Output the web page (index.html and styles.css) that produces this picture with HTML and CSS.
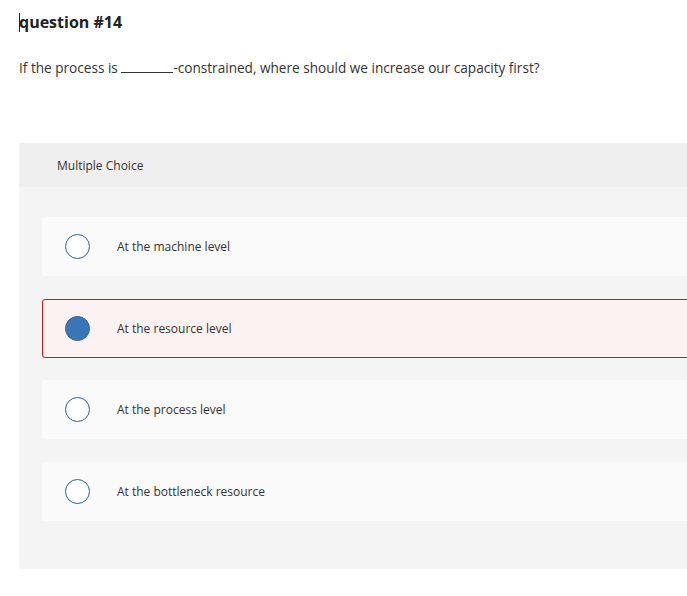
FILE: index.html
```html
<!DOCTYPE html>
<html>
<head>
<meta charset="utf-8">
<link rel="stylesheet" href="styles.css">
</head>
<body>
<div class="page">
  <h1 class="title"><span class="caret"></span>question #14</h1>
  <p class="prompt">If the process is <span class="blank"></span>-constrained, where should we increase our capacity first?</p>
  <div class="card">
    <div class="card-head">Multiple Choice</div>
    <div class="card-body">
      <div class="option"><span class="radio"></span><span class="label">At the machine level</span></div>
      <div class="option selected"><span class="radio"></span><span class="label">At the resource level</span></div>
      <div class="option"><span class="radio"></span><span class="label">At the process level</span></div>
      <div class="option"><span class="radio"></span><span class="label">At the bottleneck resource</span></div>
    </div>
  </div>
</div>
</body>
</html>
```
FILE: styles.css
```css
html, body {
  margin: 0;
  padding: 0;
  background: #fff;
  overflow: hidden;
}
body {
  font-family: "Open Sans", "Lato", sans-serif;
  color: #333;
}
.page {
  padding: 12px 0 0 19px;
}
.title {
  position: relative;
  margin: 0;
  font-size: 16px;
  font-weight: 700;
  line-height: 20px;
  color: #222;
}
.caret {
  position: absolute;
  left: 0;
  top: 1px;
  width: 1px;
  height: 19px;
  background: #222;
}
.prompt {
  margin: 27px 0 0 0;
  font-size: 13.6px;
  line-height: 18px;
  color: #333;
}
.blank {
  display: inline-block;
  width: 52px;
  height: 1px;
  border-bottom: 1px solid #333;
  vertical-align: baseline;
}
.card {
  margin-top: 66px;
  width: 720px;
  border-radius: 3px;
  background: #f4f4f4;
  overflow: hidden;
}
.card-head {
  background: #efefef;
  height: 44px;
  display: flex;
  align-items: center;
  padding-left: 38px;
  font-size: 12px;
  color: #333;
}
.card-body {
  padding: 30px 0 48px 23px;
  display: flex;
  flex-direction: column;
  gap: 22.67px;
}
.option {
  height: 59px;
  background: #fafafa;
  border-radius: 3px;
  display: flex;
  align-items: center;
  padding-left: 23px;
  box-sizing: border-box;
  font-size: 12px;
  color: #333;
}
.option.selected {
  background: #fcf2f2;
  border: 1px solid #c0171c;
  padding-left: 22px;
}
.radio {
  width: 25px;
  height: 25px;
  box-sizing: border-box;
  border: 1.5px solid #2e5f94;
  border-radius: 50%;
  background: #fff;
  flex: none;
}
.selected .radio {
  background: #3a75b8;
  border-color: #2e62a0;
}
.label {
  margin-left: 27px;
}
```
